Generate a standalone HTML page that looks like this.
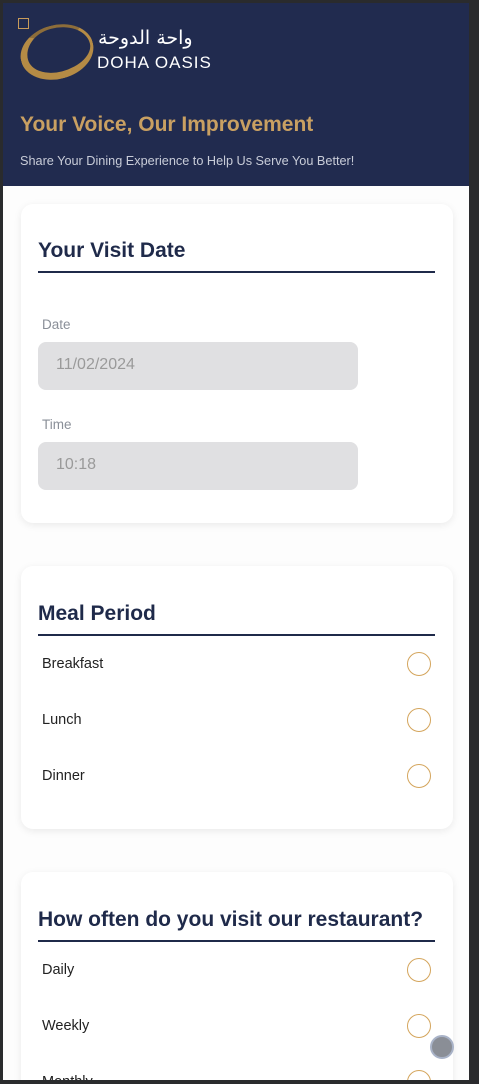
<!DOCTYPE html>
<html><head><meta charset="utf-8"><style>
*{box-sizing:border-box;margin:0;padding:0}
body{width:479px;height:1084px;overflow:hidden;background:#2a2b2d;font-family:"Liberation Sans",sans-serif;position:relative}
.page{position:absolute;left:3px;top:3px;width:466px;height:1077px;background:#fdfdfd;overflow:hidden}
.hdr{position:absolute;left:0;top:0;width:466px;height:183px;background:#212b4f}
.card{position:absolute;left:18px;width:432px;background:#fff;border-radius:12px;box-shadow:0 2px 8px rgba(0,0,0,.08)}
.t{position:absolute;left:17px;font-weight:bold;font-size:21px;color:#1f2a4a}
.ln{position:absolute;left:17px;width:397px;height:2px;background:#1f2a4a}
.lab{position:absolute;left:21px;font-size:13.5px;color:#8a8f98}
.inp{position:absolute;left:17px;width:320px;height:48px;background:#e0e0e2;border-radius:8px;font-size:16px;color:#9a9a9a;padding:14px 0 0 18px}
.opt{position:absolute;left:21px;font-size:14.5px;color:#222}
.r{position:absolute;left:386px;width:24px;height:24px;border:1.3px solid #d4a55c;border-radius:50%}
</style></head><body>
<div class="page">
<div class="hdr">
<div style="position:absolute;left:15px;top:15px;width:11px;height:11px;border:1.5px solid #c89b5a"></div>
<div style="position:absolute;left:17px;top:22px;width:74px;height:54px;border-radius:50%;border:7px solid #b58b45;border-top-color:#8d6d3a;border-top-width:3px;border-right-width:3px;transform:rotate(-15deg)"></div>
<div style="position:absolute;left:95px;top:24px;font-size:19px;color:#fff;font-family:'DejaVu Sans',sans-serif">واحة الدوحة</div>
<div style="position:absolute;left:94px;top:50px;font-size:17px;color:#fff;letter-spacing:1px">DOHA OASIS</div>
<div style="position:absolute;left:17px;top:110px;font-size:21px;font-weight:bold;color:#c9a062">Your Voice, Our Improvement</div>
<div style="position:absolute;left:17px;top:151px;font-size:12.7px;color:#c8ccd8">Share Your Dining Experience to Help Us Serve You Better!</div>
</div>
<div class="card" style="top:201px;height:319px">
<div class="t" style="top:35px">Your Visit Date</div><div class="ln" style="top:67px"></div>
<div class="lab" style="top:113px">Date</div><div class="inp" style="top:138px">11/02/2024</div>
<div class="lab" style="top:213px">Time</div><div class="inp" style="top:238px">10:18</div>
</div>
<div class="card" style="top:563px;height:263px">
<div class="t" style="top:36px">Meal Period</div><div class="ln" style="top:68px"></div>
<div class="opt" style="top:90px">Breakfast</div><div class="r" style="top:86px"></div>
<div class="opt" style="top:146px">Lunch</div><div class="r" style="top:142px"></div>
<div class="opt" style="top:202px">Dinner</div><div class="r" style="top:198px"></div>
</div>
<div class="card" style="top:869px;height:260px">
<div class="t" style="top:36px">How often do you visit our restaurant?</div><div class="ln" style="top:68px"></div>
<div class="opt" style="top:90px">Daily</div><div class="r" style="top:86px"></div>
<div class="opt" style="top:146px">Weekly</div><div class="r" style="top:142px"></div>
<div class="opt" style="top:202px">Monthly</div><div class="r" style="top:198px"></div>
</div>
<div style="position:absolute;left:427px;top:1032px;width:24px;height:24px;border-radius:50%;background:#8a8e96;border:2px solid #a9b3c8"></div>
</div>
</body></html>
